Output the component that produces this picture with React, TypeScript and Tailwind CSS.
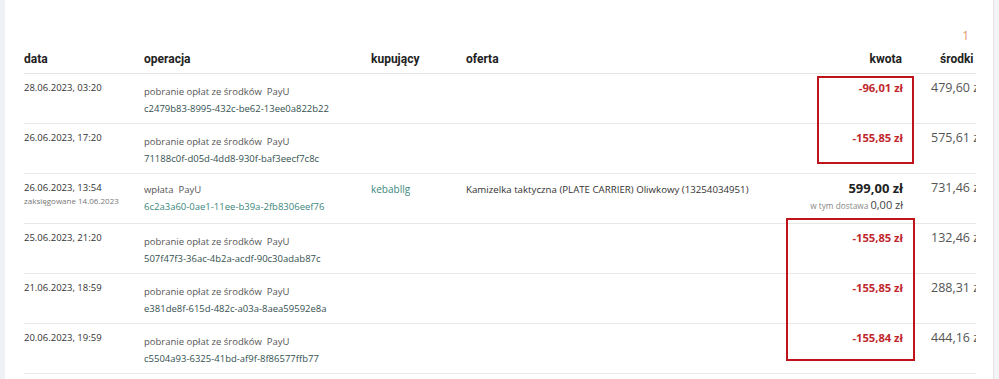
import React from "react";

type Row = {
  date: string;
  booked?: string;
  op: string;
  id: string;
  idTeal?: boolean;
  buyer?: string;
  offer?: string;
  amount: string;
  negative: boolean;
  delivery?: string;
  balance: string;
};

const rows: Row[] = [
  { date: "28.06.2023, 03:20", op: "pobranie opłat ze środków", id: "c2479b83-8995-432c-be62-13ee0a822b22", amount: "-96,01 zł", negative: true, balance: "479,60 zł" },
  { date: "26.06.2023, 17:20", op: "pobranie opłat ze środków", id: "71188c0f-d05d-4dd8-930f-baf3eecf7c8c", amount: "-155,85 zł", negative: true, balance: "575,61 zł" },
  { date: "26.06.2023, 13:54", booked: "zaksięgowane 14.06.2023", op: "wpłata", id: "6c2a3a60-0ae1-11ee-b39a-2fb8306eef76", idTeal: true, buyer: "kebabllg", offer: "Kamizelka taktyczna (PLATE CARRIER) Oliwkowy (13254034951)", amount: "599,00 zł", negative: false, delivery: "0,00 zł", balance: "731,46 zł" },
  { date: "25.06.2023, 21:20", op: "pobranie opłat ze środków", id: "507f47f3-36ac-4b2a-acdf-90c30adab87c", amount: "-155,85 zł", negative: true, balance: "132,46 zł" },
  { date: "21.06.2023, 18:59", op: "pobranie opłat ze środków", id: "e381de8f-615d-482c-a03a-8aea59592e8a", amount: "-155,85 zł", negative: true, balance: "288,31 zł" },
  { date: "20.06.2023, 19:59", op: "pobranie opłat ze środków", id: "c5504a93-6325-41bd-af9f-8f86577ffb77", amount: "-155,84 zł", negative: true, balance: "444,16 zł" },
];

const cols = "grid grid-cols-[120px_227px_95px_297px_168px_minmax(0,1fr)]";

export default function App() {
  return (
    <div
      className="relative flex h-[379px] w-[999px] overflow-hidden bg-white text-[#333]"
      style={{ fontFamily: '"Open Sans", "Liberation Sans", sans-serif' }}
    >
      <div className="w-[5px] shrink-0 bg-[#eef1f5]" />
      <div className="flex w-[988px] shrink-0 flex-col pl-[19px] pr-[17px]">
        <div className="flex h-[44px] items-end justify-end pb-0 pr-[7px]">
          <span className="text-[12px] leading-[16px] text-[#e3955f]">1</span>
        </div>
        <div className="w-[952px] overflow-hidden">
          <div
            className={`${cols} h-[30px] items-start border-b border-[#e4e4e4] pt-[7px] text-[12px] font-bold leading-[16px] text-[#222] whitespace-nowrap`}
            style={{ fontFamily: 'Roboto, "Liberation Sans", sans-serif' }}
          >
            <div>data</div>
            <div>operacja</div>
            <div>kupujący</div>
            <div>oferta</div>
            <div className="pr-[29px] text-right">kwota</div>
            <div className="pl-[9px]">środki</div>
          </div>
          {rows.map((r, i) => (
            <div
              key={i}
              className={`${cols} h-[50px] border-b border-[#e8e8e8] text-[9.5px] leading-[15px] whitespace-nowrap`}
            >
              <div className="pt-[6px] text-[#333]">
                <div>{r.date}</div>
                {r.booked && <div className="text-[8px] leading-[11px] text-[#777]">{r.booked}</div>}
              </div>
              <div className={r.booked ? "pt-[8px]" : "pt-[10px]"}>
                <div className="text-[#555]">
                  {r.op}&nbsp; PayU
                </div>
                <div className={`mt-[2px] ${r.idTeal ? "text-[#3b877c]" : "text-[#34514f]"}`}>{r.id}</div>
              </div>
              <div className="pt-[8px] text-[10px] text-[#3b877c]">{r.buyer ?? ""}</div>
              <div className="pt-[8px] text-[9.7px] text-[#333]">{r.offer ?? ""}</div>
              <div className="pr-[28px] pt-[6px] text-right">
                <div
                  className={`font-bold leading-[16px] ${r.negative ? "text-[11.2px] text-[#c0272d]" : "text-[13px] text-[#222]"}`}
                >
                  {r.amount}
                </div>
                {r.delivery && (
                  <div className="mt-[1px] leading-[16px]">
                    <span className="text-[8.3px] text-[#888]">w tym dostawa </span>
                    <span className="text-[11px] text-[#444]">{r.delivery}</span>
                  </div>
                )}
              </div>
              <div className="pt-[6px] text-[12.5px] leading-[16px] text-[#555]">{r.balance}</div>
            </div>
          ))}
        </div>
      </div>
      <div className="w-[6px] shrink-0 border-l border-[#e2e4e7] bg-[#f3f4f6]" />

      <div className="absolute left-[817px] top-[76px] h-[88px] w-[97px] border-2 border-[#c0141c]" />
      <div className="absolute left-[786px] top-[218px] h-[143px] w-[129px] border-2 border-[#c0141c]" />
    </div>
  );
}
